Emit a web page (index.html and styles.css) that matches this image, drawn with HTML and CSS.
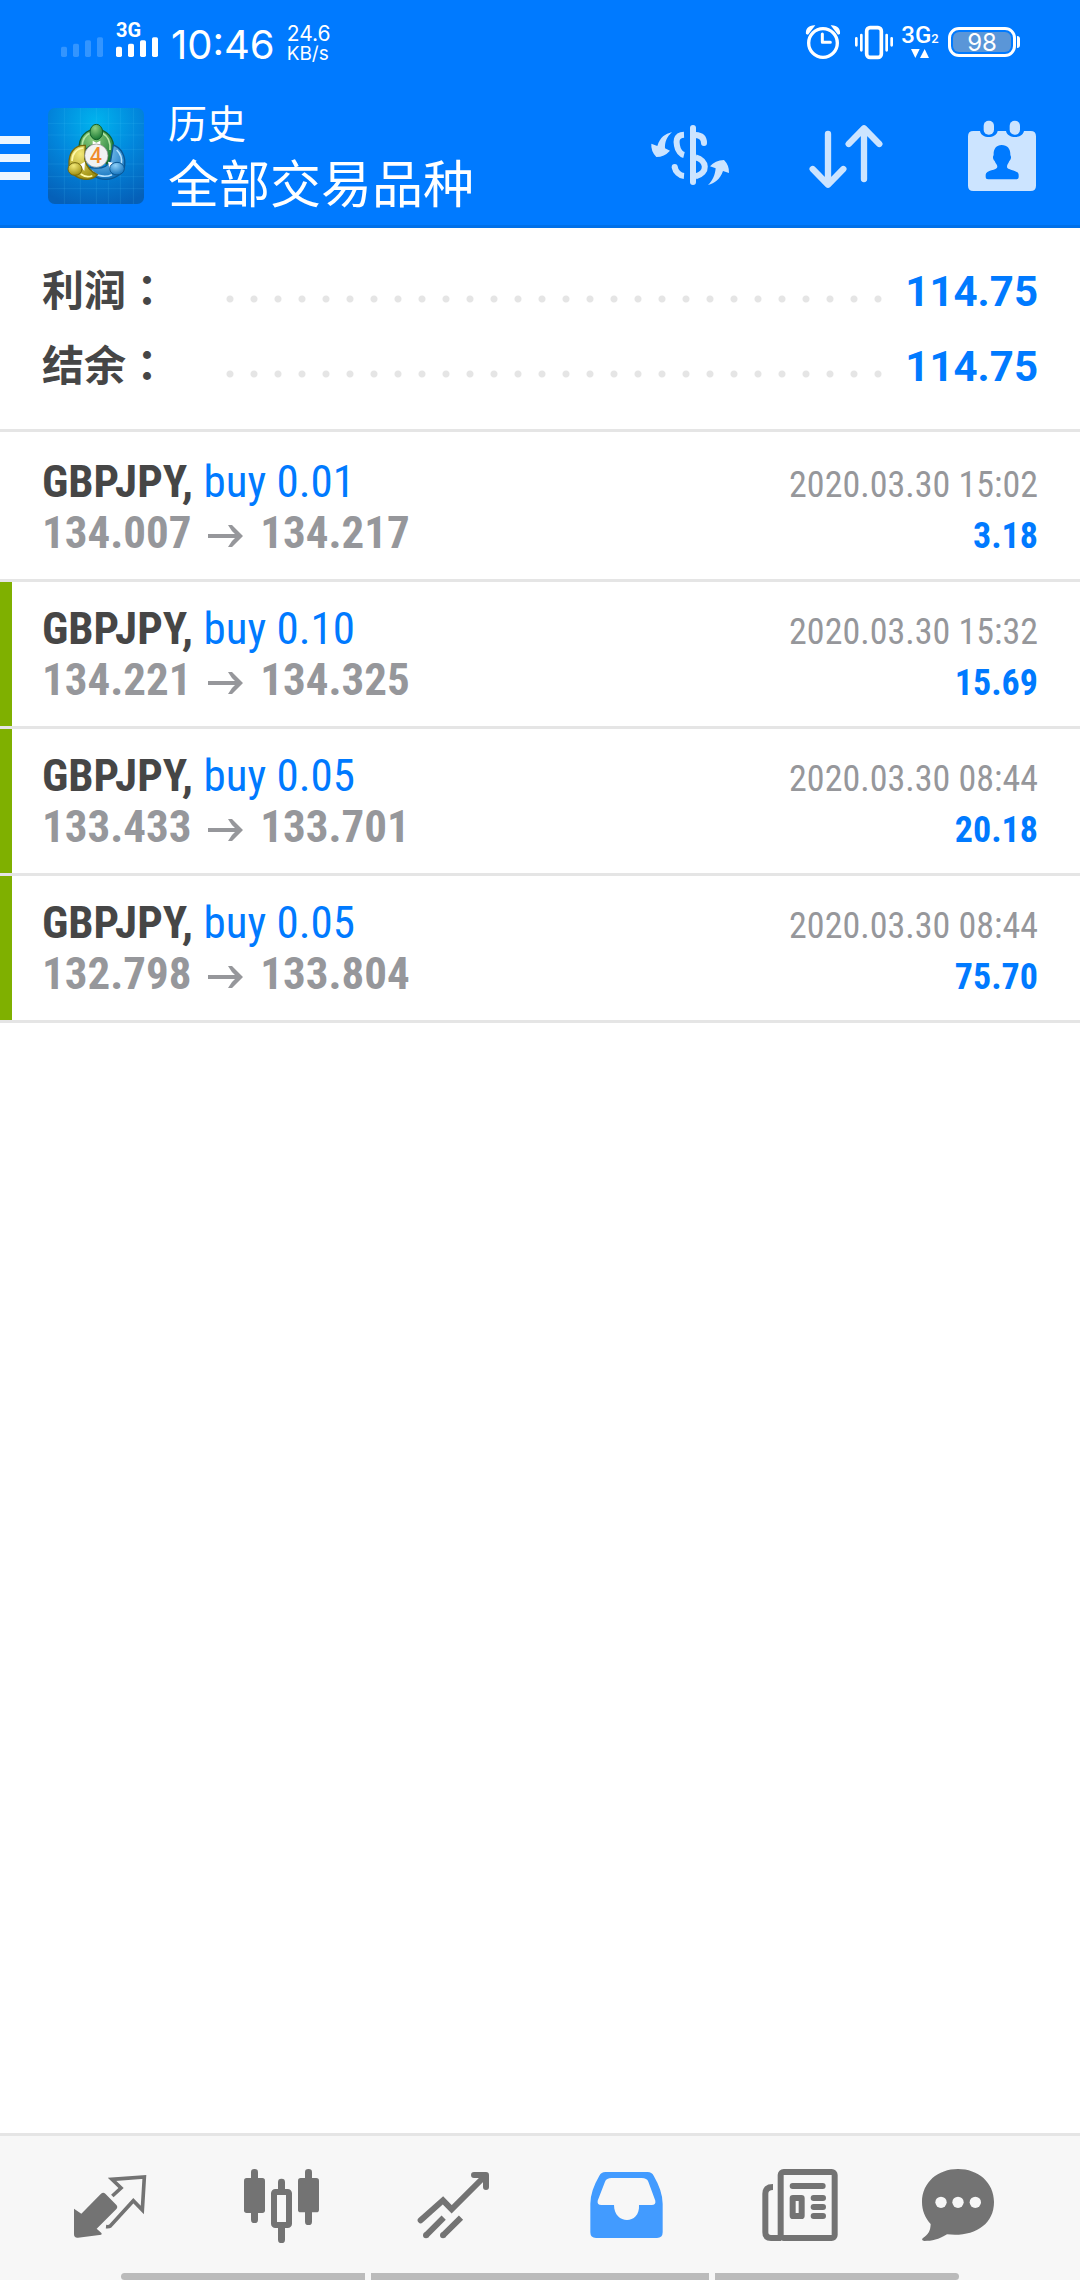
FILE: index.html
```html
<!DOCTYPE html>
<html lang="zh-CN">
<head>
<meta charset="utf-8">
<meta name="viewport" content="width=device-width, initial-scale=1">
<title>历史</title>
<link rel="stylesheet" href="styles.css">
</head>
<body>
<div class="app">
  <header class="header">
    <div class="status">
      <div class="status-side">
        <svg class="bars" viewBox="183 66 126 108" aria-hidden="true"><g fill="#3395ff"><rect x="183" y="140" width="18" height="31" rx="5"/><rect x="219" y="131" width="18" height="40" rx="5"/><rect x="255" y="121" width="18" height="50" rx="5"/><rect x="291" y="112" width="18" height="59" rx="5"/></g></svg>
        <div class="signal">
          <span class="signal-label">3G</span>
          <svg class="bars-low" viewBox="348 111 126 60" aria-hidden="true"><g fill="#fff"><rect x="348" y="140" width="18" height="31" rx="5"/><rect x="384" y="131" width="18" height="40" rx="5"/><rect x="420" y="121" width="18" height="50" rx="5"/><rect x="456" y="112" width="18" height="59" rx="5"/></g></svg>
        </div>
        <span class="clock">10:46</span>
        <div class="speed"><span>24.6</span><span class="unit">KB/s</span></div>
      </div>
      <div class="status-side status-right">
        <svg class="status-icon" viewBox="69 66 120 120" aria-hidden="true"><circle cx="129" cy="129" r="43" fill="none" stroke="#fff" stroke-width="10"/><path d="M127 102v25h24" fill="none" stroke="#fff" stroke-width="9" stroke-linejoin="round" stroke-linecap="round"/><path d="M78 102C76 86 86 75 106 76L84 104zM180 102C182 86 172 75 152 76L174 104z" fill="#fff"/></svg>
        <svg class="status-icon" viewBox="222 66 120 120" aria-hidden="true"><rect x="260" y="83" width="44" height="89" rx="10" fill="none" stroke="#fff" stroke-width="11"/><path d="M229 115v21M335 115v21M244 105v46M320 105v46" stroke="#fff" stroke-width="8" stroke-linecap="round"/></svg>
        <div class="net">
          <span class="net-label">3G<small>2</small></span>
          <svg class="net-arrows" viewBox="390 147 54 27" aria-hidden="true"><path d="M390 147h26l-13 27zM417 174h27l-13-27z" fill="#fff"/></svg>
        </div>
        <div class="battery"><span class="battery-level">98</span></div>
      </div>
    </div>
    <div class="toolbar">
      <button class="menu" type="button" aria-label="菜单"><span></span><span></span><span></span></button>
      <svg class="logo" viewBox="144 54 288 288" aria-hidden="true">
        <defs>
          <radialGradient id="sky" cx="50%" cy="15%" r="90%"><stop offset="0" stop-color="#00b4ee"/><stop offset=".5" stop-color="#0286dc"/><stop offset="1" stop-color="#0560b8"/></radialGradient>
          <radialGradient id="green" cx="40%" cy="25%" r="75%"><stop offset="0" stop-color="#8fd080"/><stop offset="1" stop-color="#1b7a35"/></radialGradient>
          <radialGradient id="gold" cx="40%" cy="25%" r="75%"><stop offset="0" stop-color="#f3e978"/><stop offset="1" stop-color="#9f8f10"/></radialGradient>
          <radialGradient id="blue" cx="40%" cy="25%" r="75%"><stop offset="0" stop-color="#8fd0f8"/><stop offset="1" stop-color="#1272bd"/></radialGradient>
        </defs>
        <rect x="144" y="54" width="288" height="288" rx="20" fill="url(#sky)"/>
        <path d="M193 54v288M241 54v288M289 54v288M325 54v288M361 54v288M400 54v288M144 100h288M144 135h288M144 178h288M144 222h288M144 260h288M144 296h288" stroke="#5ccbff" stroke-opacity=".14" stroke-width="3"/>
        <path d="M238 178c-4-38 22-60 51-60s57 25 51 65c-3 22-13 35-21 39-2-32-20-58-31-58s-26 6-34 20z" fill="url(#green)" stroke="#13612b" stroke-width="4"/>
        <path d="M246 172c0-26 13-39 27-44M330 180c2-24-8-42-22-50" fill="none" stroke="#b5e5a5" stroke-width="5"/>
        <path d="M340 165c25 9 37 34 34 62-4 26-31 41-56 41-32 0-52-19-54-36 28 5 58 3 68-20z" fill="url(#blue)" stroke="#0b5794" stroke-width="4"/>
        <path d="M350 180c13 12 17 28 14 44M276 242c14 17 40 21 60 12" fill="none" stroke="#b5e2ff" stroke-width="5"/>
        <path d="M256 166c-33-2-51 24-49 58 2 27 26 45 56 44 13-1 23-6 29-14-22-10-33-24-38-47z" fill="url(#gold)" stroke="#75690c" stroke-width="4"/>
        <path d="M250 174c-21 2-34 18-34 39M242 252c12 9 25 9 35 5" fill="none" stroke="#fff9a8" stroke-width="5"/>
        <path d="M278 152l11 6 12-6v12h-23zM238 225l17-10-2 28zM324 215l18 4-12 24z" fill="#fff"/>
        <ellipse cx="289" cy="126" rx="19" ry="23" fill="url(#green)" stroke="#13612b" stroke-width="3"/>
        <ellipse cx="225" cy="237" rx="21" ry="19" fill="url(#gold)" stroke="#75690c" stroke-width="3"/>
        <ellipse cx="351" cy="236" rx="22" ry="19" fill="url(#blue)" stroke="#0b5794" stroke-width="3"/>
        <circle cx="289" cy="197" r="35" fill="#f2f2f2" stroke="#888" stroke-width="2"/>
        <text class="logo-digit" x="288" y="219" text-anchor="middle">4</text>
      </svg>
      <div class="titles">
        <span class="section">历史</span>
        <h1 class="title">全部交易品种</h1>
      </div>
      <div class="actions">
        <button class="action" type="button" aria-label="货币"><svg viewBox="45 27 270 270"><g fill="none" stroke="#cce4ff" stroke-width="18"><path d="M162 101C135 102 139 126 141 134C143 150 154 160 162 162" /><path d="M197 102C214 103 222 112 222 126" stroke-linecap="round"/><path d="M197 169C231 178 236 216 197 226"/><path d="M134 198C136 212 149 224 162 225"/></g><circle cx="134" cy="198" r="9" fill="#cce4ff"/><path d="M189 81v162" stroke="#cce4ff" stroke-width="18" stroke-linecap="round"/><path d="M126 93C105 100 91 107 82 135L64 128Q62 150 79 168Q103 168 120 149L105 142C104 124 110 108 126 93zM234 252C254 247 270 235 279 210L297 216Q298 193 282 177Q255 178 240 196L257 202C255 222 249 238 234 252z" fill="#cce4ff"/></svg></button>
        <button class="action" type="button" aria-label="排序"><svg viewBox="513 27 270 270"><path d="M594 99v150M548 204l46 47 46-47M702 234V84M656 129l46-47 46 47" fill="none" stroke="#cce4ff" stroke-width="19" stroke-linecap="round" stroke-linejoin="round"/></svg></button>
        <button class="action" type="button" aria-label="日期"><svg viewBox="981 27 270 270"><path d="M1030 90h20c4 24 48 24 53 0h25c5 24 49 24 54 0h20q16 0 16 16v148q0 16-16 16h-172q-16 0-16-16V106q0-16 16-16z" fill="#cce4ff"/><rect x="1061" y="59" width="31" height="42" rx="15" fill="#cce4ff"/><rect x="1139" y="59" width="31" height="42" rx="15" fill="#cce4ff"/><path d="M1115 132c18 0 27 13 26 30 4 6 2 14-3 18-3 9-7 10-7 18 0 10 35 9 35 23v8q0 6-7 6h-85q-7 0-7-6v-8c0-14 35-13 35-23 0-8-5-9-8-18-5-4-7-12-3-18-1-17 7-30 24-30z" fill="#007aff"/></svg></button>
      </div>
    </div>
  </header>

  <main class="content">
    <dl class="summary">
      <div class="summary-row"><dt>利润<span class="colon" lang="zh-TW">：</span></dt><dd class="dots"></dd><dd class="total">114.75</dd></div>
      <div class="summary-row"><dt>结余<span class="colon" lang="zh-TW">：</span></dt><dd class="dots"></dd><dd class="total">114.75</dd></div>
    </dl>
    <ul class="deals">
      <li class="deal">
        <div class="deal-line"><span class="name"><b>GBPJPY,</b> <span class="side">buy 0.01</span></span><time class="date">2020.03.30 15:02</time></div>
        <div class="deal-line"><span class="prices">134.007 <svg class="arrow" viewBox="0 0 36 24" role="img" aria-label="至"><path d="M0 12h30" stroke="#96979b" stroke-width="4"/><path d="M20 1L24 1L35 12L24 23L20 23Q23 17 29 12Q23 7 20 1z" fill="#96979b"/></svg> 134.217</span><span class="profit">3.18</span></div>
      </li>
      <li class="deal marked">
        <div class="deal-line"><span class="name"><b>GBPJPY,</b> <span class="side">buy 0.10</span></span><time class="date">2020.03.30 15:32</time></div>
        <div class="deal-line"><span class="prices">134.221 <svg class="arrow" viewBox="0 0 36 24" role="img" aria-label="至"><path d="M0 12h30" stroke="#96979b" stroke-width="4"/><path d="M20 1L24 1L35 12L24 23L20 23Q23 17 29 12Q23 7 20 1z" fill="#96979b"/></svg> 134.325</span><span class="profit">15.69</span></div>
      </li>
      <li class="deal marked">
        <div class="deal-line"><span class="name"><b>GBPJPY,</b> <span class="side">buy 0.05</span></span><time class="date">2020.03.30 08:44</time></div>
        <div class="deal-line"><span class="prices">133.433 <svg class="arrow" viewBox="0 0 36 24" role="img" aria-label="至"><path d="M0 12h30" stroke="#96979b" stroke-width="4"/><path d="M20 1L24 1L35 12L24 23L20 23Q23 17 29 12Q23 7 20 1z" fill="#96979b"/></svg> 133.701</span><span class="profit">20.18</span></div>
      </li>
      <li class="deal marked">
        <div class="deal-line"><span class="name"><b>GBPJPY,</b> <span class="side">buy 0.05</span></span><time class="date">2020.03.30 08:44</time></div>
        <div class="deal-line"><span class="prices">132.798 <svg class="arrow" viewBox="0 0 36 24" role="img" aria-label="至"><path d="M0 12h30" stroke="#96979b" stroke-width="4"/><path d="M20 1L24 1L35 12L24 23L20 23Q23 17 29 12Q23 7 20 1z" fill="#96979b"/></svg> 133.804</span><span class="profit">75.70</span></div>
      </li>
    </ul>
  </main>

  <footer class="footer">
    <nav class="tabs">
      <a class="tab" href="#quotes" aria-label="行情"><svg viewBox="195 144 270 270"><path d="M222 296l22 15 59-60q7-5 13 0l34 35q4 5 0 10l-60 60 15 14-1 4-70 9q-12 1-12-10z" fill="#737373"/><path d="M337 258l26-24-27-26 97-7-6 99-27-28-69 76q-4 3-13 2" fill="none" stroke="#737373" stroke-width="11"/></svg></a>
      <a class="tab" href="#chart" aria-label="图表"><svg viewBox="711 144 270 270"><g fill="#737373"><rect x="732" y="204" width="63" height="105" rx="8"/><rect x="753" y="177" width="21" height="162" rx="10"/><rect x="894" y="204" width="63" height="103" rx="8"/><rect x="915" y="177" width="21" height="168" rx="10"/><rect x="834" y="206" width="21" height="50" rx="10"/><rect x="834" y="340" width="21" height="59" rx="10"/></g><rect x="822" y="246" width="45" height="99" rx="4" fill="#f7f7f7" stroke="#737373" stroke-width="18"/></svg></a>
      <a class="tab" href="#trade" aria-label="交易"><svg viewBox="147 144 270 270"><g fill="none" stroke="#737373" stroke-width="18"><path d="M182 331l67-60 26 27L375 198" stroke-linecap="round" stroke-linejoin="miter"/><path d="M342 195h36v36" stroke-linecap="round" stroke-linejoin="round"/><path d="M198 376l53-53M249 376l54-53"/></g><circle cx="198" cy="376" r="9" fill="#737373"/><circle cx="249" cy="376" r="9" fill="#737373"/></svg></a>
      <a class="tab" href="#history" aria-label="历史" aria-current="page"><svg viewBox="663 144 270 270"><path d="M736 186h127q12 0 18 11 27 46 27 84v86q0 17-17 17H708q-17 0-17-17v-86q0-38 27-84 6-11 18-11z" fill="#429bff"/><path d="M755 204h90q16 0 20 11l21 57q2 13-11 13h-38c4 60-75 60-75 0h-38q-13 0-11-13l22-57q4-11 20-11z" fill="#f7f7f7"/></svg></a>
      <a class="tab" href="#news" aria-label="新闻"><svg viewBox="99 144 270 270"><g fill="none" stroke="#737373" stroke-width="18"><rect x="182" y="186" width="162" height="198" rx="9"/><path d="M159 231q-23 0-23 20v116q0 17 17 17h30"/><path d="M218 228h90M281 264h28M281 291h28M281 318h28" stroke-linecap="round"/><rect x="218" y="264" width="27" height="54" rx="1"/></g></svg></a>
      <a class="tab" href="#mail" aria-label="消息"><svg viewBox="615 144 270 270"><path d="M714 177c60 0 108 40 108 99 0 71-64 106-141 97-25 16-45 20-68 20q-10-2-5-8c18-13 23-21 24-43-16-18-26-40-26-66 0-59 48-99 108-99z" fill="#737373"/><g fill="#f7f7f7"><circle cx="663" cy="277" r="17"/><circle cx="714" cy="277" r="17"/><circle cx="766" cy="277" r="17"/></g></svg></a>
    </nav>
    <div class="gestures"><span></span><span></span><span></span></div>
  </footer>
</div>
</body>
</html>
```

FILE: styles.css
```css
* {
  box-sizing: border-box;
}

body {
  margin: 0;
  background: #fff;
  font-family: Roboto, "Noto Sans CJK SC", sans-serif;
}

button {
  padding: 0;
  border: 0;
  background: none;
}

svg {
  display: block;
}

.app {
  display: flex;
  flex-direction: column;
  min-height: 100vh;
}

/* Header */
.header {
  background: #007aff;
  border-bottom: 3px solid #0070e8;
  color: #fff;
}

.status {
  display: flex;
  justify-content: space-between;
  height: 84px;
  padding: 0 60px 0 61px;
  font-family: Inter, sans-serif;
}

.status-side {
  display: flex;
  align-items: flex-start;
  padding-top: 22px;
}

.bars {
  width: 42px;
  height: 36px;
}

.signal {
  margin-left: 13px;
}

.signal-label {
  display: block;
  height: 15px;
  font-family: Roboto, sans-serif;
  font-size: 20px;
  line-height: 16px;
  font-weight: 700;
}

.bars-low {
  width: 42px;
  height: 20px;
}

.clock {
  margin-left: 13px;
  font-size: 40px;
  line-height: 46px;
}

.speed {
  display: flex;
  flex-direction: column;
  margin-left: 12px;
  padding-top: 1px;
  font-size: 21px;
  line-height: 21px;
}

.unit {
  font-size: 19px;
  line-height: 19px;
}

.status-icon {
  width: 40px;
  height: 40px;
  margin-right: 11px;
}

.net {
  display: flex;
  flex-direction: column;
  align-items: center;
  width: 34px;
  margin: 4px 11px 0 -2px;
}

.net-label {
  height: 18px;
  font-family: Roboto, sans-serif;
  font-size: 24px;
  line-height: 18px;
  font-weight: 500;
  white-space: nowrap;
}

.net-label small {
  font-size: 13px;
}

.net-arrows {
  width: 18px;
  height: 9px;
  margin-top: 5px;
}

.battery {
  position: relative;
  width: 68px;
  height: 30px;
  margin: 5px 4px 0 0;
  padding: 2px;
  border: 3px solid #fff;
  border-radius: 11px;
}

.battery::after {
  content: "";
  position: absolute;
  top: 6px;
  right: -7px;
  width: 3px;
  height: 12px;
  border-radius: 0 3px 3px 0;
  background: #fff;
}

.battery-level {
  display: block;
  height: 20px;
  border-radius: 6px;
  background: #5a96d8;
  font-size: 24px;
  line-height: 21px;
  text-align: center;
}

.toolbar {
  display: flex;
  align-items: center;
  height: 141px;
  padding-right: 33px;
}

.menu {
  display: flex;
  flex-direction: column;
  gap: 10px;
  width: 30px;
  margin: 6px 18px 0 0;
}

.menu span {
  height: 8px;
  background: #edf6ff;
}

.logo {
  width: 96px;
  height: 96px;
  margin-top: 3px;
}

.logo-digit {
  font-family: "Open Sans", sans-serif;
  font-size: 62px;
  font-weight: 600;
  fill: #f08a2c;
}

.titles {
  display: flex;
  flex-direction: column;
  margin-left: 24px;
  padding-top: 8px;
}

.section {
  font-size: 39px;
  line-height: 54px;
}

.title {
  margin: 0;
  font-size: 51px;
  line-height: 68px;
  font-weight: 400;
}

.actions {
  display: flex;
  gap: 66px;
  margin-left: auto;
}

.action svg {
  width: 90px;
  height: 90px;
}

/* Account summary */
.content {
  flex: 1;
}

.summary {
  margin: 0;
  padding: 25px 42px 26px;
  border-bottom: 3px solid #e5e5e5;
}

.summary-row {
  display: flex;
  align-items: center;
  height: 75px;
  font-size: 42px;
  font-weight: 700;
}

.summary dt {
  width: 176px;
  padding-bottom: 6px;
  color: #464646;
  font-family: "Noto Sans CJK SC", sans-serif;
}

.colon {
  font-family: "Noto Sans CJK TC", sans-serif;
}

.summary dd {
  margin: 0;
}

.dots {
  flex: 1;
  height: 24px;
  background: radial-gradient(circle, #e5e5e5 3px, transparent 4px) 0 8px / 24px 24px repeat-x;
}

.summary .total {
  width: 148px;
  padding-top: 2px;
  color: #007aff;
  text-align: right;
}

/* Deals */
.deals {
  margin: 0;
  padding: 3px 0 0;
  list-style: none;
}

.deal {
  padding: 21px 42px;
  border-bottom: 3px solid #e5e5e5;
  color: #96979b;
  font-family: "Roboto Condensed", "Liberation Sans Narrow", Roboto, sans-serif;
  font-size: 45px;
  line-height: 51px;
}

.marked {
  background: linear-gradient(#7fb000, #7fb000) 0 0 / 12px 100% no-repeat;
}

.deal-line {
  display: flex;
  align-items: baseline;
  justify-content: space-between;
  height: 51px;
}

.name b {
  color: #464646;
}

.side {
  color: #007aff;
}

.prices {
  font-weight: 700;
}

.arrow {
  display: inline-block;
  width: 36px;
  height: 24px;
  margin: 0 6px;
}

.date,
.profit {
  font-size: 36px;
}

.profit {
  color: #007aff;
  font-weight: 700;
}

/* Bottom navigation */
.footer {
  border-top: 3px solid #e5e5e5;
  background: #f7f7f7;
}

.tabs {
  display: flex;
  height: 137px;
  padding: 0 24px 4px;
}

.tab {
  display: flex;
  flex: 1;
  align-items: center;
  justify-content: center;
}

.tab svg {
  width: 90px;
  height: 90px;
  overflow: visible;
}

.gestures {
  display: flex;
  justify-content: center;
  gap: 6px;
}

.gestures span {
  width: 244px;
  height: 7px;
  background: #bbb;
}

.gestures span:nth-child(2) {
  width: 338px;
}

.gestures span:first-child {
  border-radius: 4px 0 0 4px;
}

.gestures span:last-child {
  border-radius: 0 4px 4px 0;
}
```
